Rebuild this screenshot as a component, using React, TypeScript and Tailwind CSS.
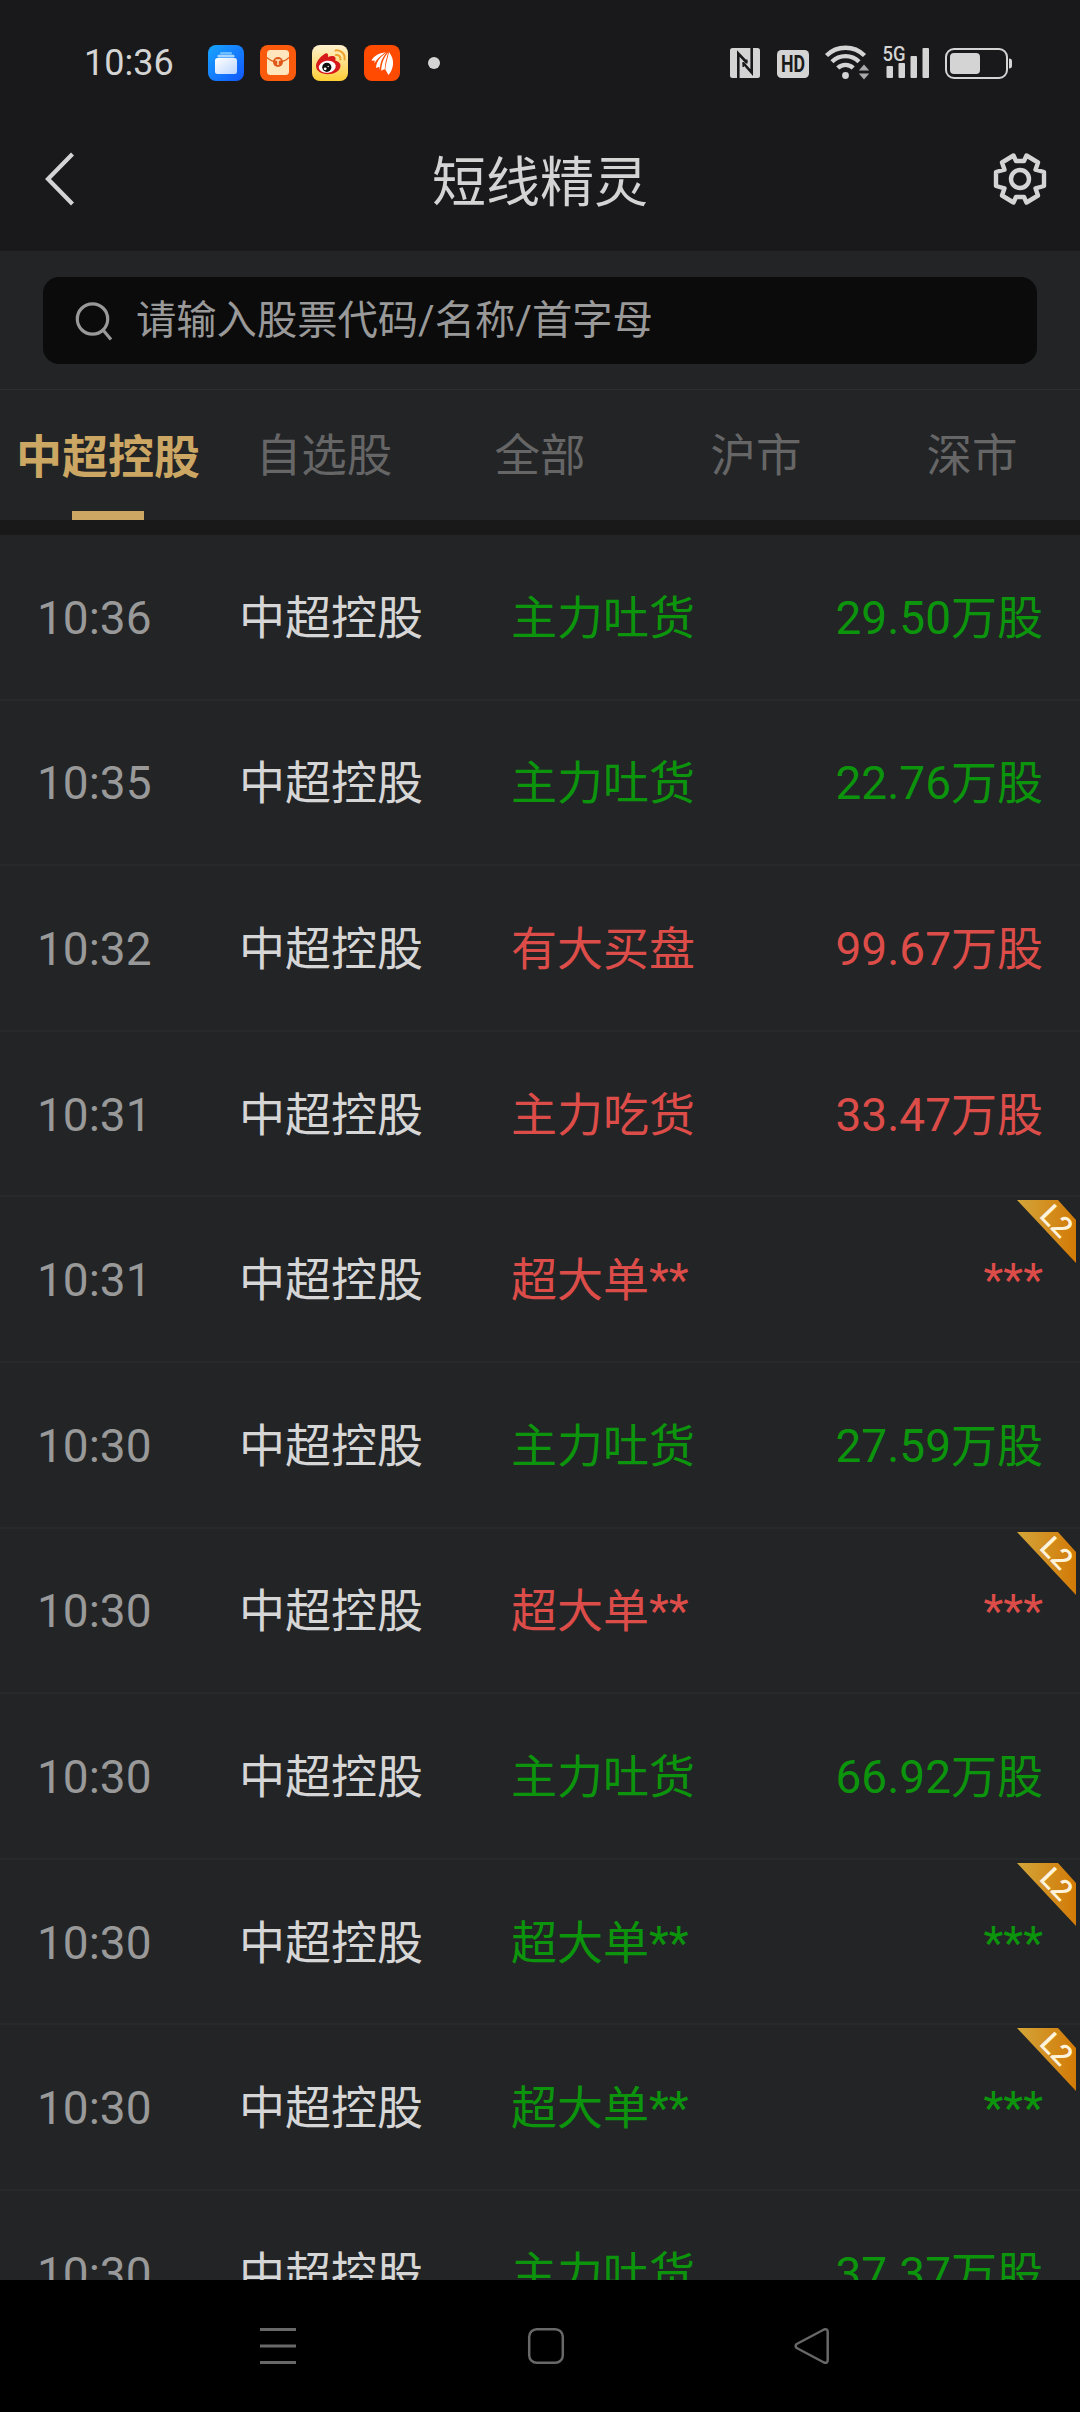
type Tone = 'up' | 'down';

interface Signal {
  time: string;
  name: string;
  action: string;
  amount: string;
  tone: Tone;
  locked?: boolean;
}

const TABS = ['中超控股', '自选股', '全部', '沪市', '深市'];

const SIGNALS: Signal[] = [
  { time: '10:36', name: '中超控股', action: '主力吐货', amount: '29.50万股', tone: 'down' },
  { time: '10:35', name: '中超控股', action: '主力吐货', amount: '22.76万股', tone: 'down' },
  { time: '10:32', name: '中超控股', action: '有大买盘', amount: '99.67万股', tone: 'up' },
  { time: '10:31', name: '中超控股', action: '主力吃货', amount: '33.47万股', tone: 'up' },
  { time: '10:31', name: '中超控股', action: '超大单**', amount: '***', tone: 'up', locked: true },
  { time: '10:30', name: '中超控股', action: '主力吐货', amount: '27.59万股', tone: 'down' },
  { time: '10:30', name: '中超控股', action: '超大单**', amount: '***', tone: 'up', locked: true },
  { time: '10:30', name: '中超控股', action: '主力吐货', amount: '66.92万股', tone: 'down' },
  { time: '10:30', name: '中超控股', action: '超大单**', amount: '***', tone: 'down', locked: true },
  { time: '10:30', name: '中超控股', action: '超大单**', amount: '***', tone: 'down', locked: true },
  { time: '10:30', name: '中超控股', action: '主力吐货', amount: '37.37万股', tone: 'down' },
];

function AppIcons() {
  return (
    <div className="flex gap-4">
      <svg width="36" height="36" viewBox="0 0 36 36">
        <defs>
          <linearGradient id="files" x1="0" y1="0" x2="1" y2="1">
            <stop offset="0" stopColor="#17a5ff" />
            <stop offset="1" stopColor="#1257fb" />
          </linearGradient>
          <linearGradient id="folder" x1="0" y1="0" x2="1" y2="1">
            <stop offset="0" stopColor="#ffffff" />
            <stop offset="1" stopColor="#bcd6ff" />
          </linearGradient>
        </defs>
        <rect width="36" height="36" rx="8" fill="url(#files)" />
        <rect x="12" y="7" width="12" height="2.5" rx="1.2" fill="#6dbdff" />
        <rect x="9.500" y="9.800" width="17" height="2.600" rx="1.2" fill="#a5d5ff" />
        <rect x="7" y="13" width="22" height="16" rx="2.500" fill="url(#folder)" />
      </svg>
      <svg width="36" height="36" viewBox="0 0 36 36">
        <rect width="36" height="36" rx="8" fill="#f95a0c" />
        <rect x="7" y="5" width="22" height="25" rx="3.500" fill="#ffe6bd" />
        <path d="M7 12.500c3 3 7 4.500 11 4.500s8-1.500 11-4.500" fill="none" stroke="#e2601c" strokeWidth="1.3" />
        <circle cx="18" cy="17" r="5" fill="#e0571a" />
        <path d="M15.500 15h5M18 15v5" stroke="#ffe6bd" strokeWidth="1.5" />
      </svg>
      <svg width="36" height="36" viewBox="0 0 36 36">
        <defs>
          <linearGradient id="weibo" x1="0" y1="0" x2="0" y2="1">
            <stop offset="0" stopColor="#fff0cf" />
            <stop offset="1" stopColor="#ffcf35" />
          </linearGradient>
        </defs>
        <rect width="36" height="36" rx="8" fill="url(#weibo)" />
        <path
          d="M4 21c0-5 6-11 9.500-12.500 2-.7 3 1 2.500 3.500 3-1.500 7-1.500 7.500 1 .2 1-.2 2-.2 2.500 3 .8 5.200 2.500 5.200 5.200 0 5-6.500 8.500-12.800 8.500S4 26 4 21z"
          fill="#d8191c"
        />
        <ellipse cx="15.300" cy="21.800" rx="8.500" ry="6" fill="#fff" transform="rotate(-8 15.300 21.800)" />
        <circle cx="14.800" cy="22.300" r="4.600" fill="#111" />
        <circle cx="13.200" cy="23.800" r="1.400" fill="#fff" />
        <circle cx="16.200" cy="21.500" r=".7" fill="#fff" />
        <path d="M23.500 5.500c5-1 10 3.500 9 9M24 10c2.600-.4 5 1.600 4.400 4.600" fill="none" stroke="#eda02c" strokeWidth="2" strokeLinecap="round" />
      </svg>
      <svg width="36" height="36" viewBox="0 0 36 36">
        <rect width="36" height="36" rx="8" fill="#ff4a02" />
        <g fill="#fff">
          <path d="M21.500 7.200C15 8 9.500 11 7.500 15.500l3.300.3-.6 2.800c2.500-4.600 6.300-7.800 11.300-11.400z" />
          <path d="M23 7.300c-6 4-10.500 8.500-11 15.700l3.300-1.300.5 3.600C16 17.500 18.500 12 23 7.300z" />
          <path d="M24.300 7.300C20 12.500 17.500 18 17.200 25.800l3-1.600.5.500c.2-6.700 2-12.200 3.600-17.400z" />
          <path d="M25 7c-1 5.500-3.500 12-3.700 17.500l3.200 5.500c5.500-6.500 6.500-15.500.5-23z" />
        </g>
      </svg>
    </div>
  );
}

function SystemIcons() {
  return (
    <svg width="284" height="40" viewBox="730 42 284 40" fill="#d4d4d4">
      {/* nfc */}
      <rect x="730" y="47" width="30" height="30" rx="2.500" />
      <path d="M738.300 77V52.500l8.500 9M751.700 47v24.500l-8.500-9.500" fill="none" stroke="#19191b" strokeWidth="2.600" />
      <path d="M743.200 66v-5M746.800 58.500v4" fill="none" stroke="#19191b" strokeWidth="1.500" />
      {/* hd */}
      <rect x="777" y="49" width="32" height="28" rx="4.500" />
      <text x="793" y="71.300" fill="#19191b" textAnchor="middle" textLength="24" lengthAdjust="spacingAndGlyphs" className="font-[Roboto] text-[23px] font-bold">
        HD
      </text>
      {/* wifi */}
      <g fill="none" stroke="#d4d4d4" strokeWidth="4.400">
        <path d="M826.500 54.500a27 27 0 0 1 38 0" />
        <path d="M832 60.800a19 19 0 0 1 27 0" />
        <path d="M837.800 67a11 11 0 0 1 15.400 0" />
      </g>
      <circle cx="845.500" cy="74.500" r="3.400" />
      <path d="M864 63.500l5.200 6h-10.400zM864 78.500l5.200-6h-10.400z" fill="#a9a9a9" />
      {/* signal */}
      <text x="882.500" y="60" textLength="23" lengthAdjust="spacingAndGlyphs" className="font-[Roboto] text-[21px] font-medium">
        5G
      </text>
      <rect x="886.500" y="65" width="6.500" height="12" rx="1" />
      <rect x="898.500" y="62" width="6.500" height="15" rx="1" />
      <rect x="910.500" y="55" width="6.500" height="22" rx="1" />
      <rect x="922.500" y="47" width="6.500" height="30" rx="1" />
      {/* battery */}
      <rect x="946" y="48" width="61" height="29" rx="8" fill="none" stroke="#d4d4d4" strokeWidth="2" />
      <rect x="950" y="52" width="30" height="21" rx="4" />
      <path d="M1009 57.500c2.200 0 3 1 3 2.500v5c0 1.500-.8 2.500-3 2.500z" />
    </svg>
  );
}

function StatusBar() {
  return (
    <div className="flex h-[125px] items-center pr-[66px] pl-[84px] text-[#d4d4d4]">
      <span className="w-[124px] text-[36px] leading-none">10:36</span>
      <AppIcons />
      <span className="ml-7 size-3 rounded-full bg-[#d4d4d4]" />
      <div className="ml-auto">
        <SystemIcons />
      </div>
    </div>
  );
}

function TitleBar() {
  return (
    <header className="flex h-[126px] items-center justify-between pr-[32px] pb-[18px] pl-[43px] text-[#d4d4d4]">
      <svg width="54" height="54" viewBox="0 0 54 54" fill="none" stroke="currentColor" strokeWidth="4.200">
        <path d="M29.500 2 5 27l24.500 25" />
      </svg>
      <h1 className="pt-[9px] pr-[9px] text-[54px] leading-none">短线精灵</h1>
      <svg width="56" height="56" viewBox="0 0 56 56" fill="none" stroke="currentColor" strokeWidth="4.400" strokeLinejoin="round">
        <path d="M21.500 4.500 24 10h8l2.500-5.500L46 11.500l-2.500 7.200 8.500 2.300v14l-8.500 2.300L46 44.500l-11.500 7L32 46h-8l-2.500 5.500L10 44.500l2.500-7.200L4 35V21l8.500-2.300L10 11.500z" />
        <circle cx="28" cy="28" r="9" />
      </svg>
    </header>
  );
}

function SearchBox() {
  return (
    <div className="h-[139px] border-b border-[#2d2f31] px-[43px] pt-[26px]">
      <div className="flex h-[87px] items-center rounded-2xl bg-[#0b0b0b] pl-8 text-[#999]">
        <svg width="38" height="40" viewBox="0 0 38 40" fill="none" stroke="currentColor" strokeWidth="3.200">
          <circle cx="17.500" cy="18" r="15.200" />
          <path d="m28 29 8 9.500" />
        </svg>
        <span className="ml-[23px] pt-0.5 text-[40.3px] leading-none">请输入股票代码/名称/首字母</span>
      </div>
    </div>
  );
}

function Tabs() {
  return (
    <nav className="grid h-[130px] grid-cols-5 text-[45.5px] leading-none">
      {TABS.map((tab, i) => (
        <div key={tab} className="flex flex-col items-center justify-between pt-11 whitespace-nowrap">
          <span className={i === 0 ? 'text-[46px] font-bold text-[#cba763]' : 'text-[#666]'}>{tab}</span>
          {i === 0 && <span className="h-[9px] w-[72px] bg-[#cba763]" />}
        </div>
      ))}
    </nav>
  );
}

function L2Badge() {
  return (
    <svg className="absolute top-[3px] right-1" width="59" height="63" viewBox="0 0 59 63">
      <defs>
        <linearGradient id="l2" x1="0" y1="0" x2="1" y2="0">
          <stop offset="0" stopColor="#d3a53a" />
          <stop offset="1" stopColor="#d27a06" />
        </linearGradient>
      </defs>
      <path d="M0 0h41l18 20v43z" fill="url(#l2)" />
      <text transform="translate(39.500 21) rotate(46)" y="10" fill="#fff3dc" textAnchor="middle" className="font-[Roboto] text-[29px] font-medium">
        L2
      </text>
    </svg>
  );
}

function SignalRow({ signal }: { signal: Signal }) {
  const color = signal.tone === 'up' ? 'text-[#dc4c48]' : 'text-[#0c940c]';

  return (
    <li className="relative flex h-[165.6px] shrink-0 items-center border-b-2 border-[#28292b] pt-0.5 pr-[37px] pl-[37px]">
      <span className="w-[202px] text-[#999]">{signal.time}</span>
      <span className="w-[272px] text-[#d6d6d6]">{signal.name}</span>
      <span className={color}>{signal.action}</span>
      <span className={`ml-auto ${color}`}>{signal.amount}</span>
      {signal.locked && <L2Badge />}
    </li>
  );
}

function NavigationBar() {
  return (
    <footer className="flex h-[132px] items-center bg-black pl-[258px] text-[#686868]">
      <svg width="40" height="40" viewBox="0 0 40 40" stroke="currentColor" strokeWidth="3">
        <path d="M2 3.500h36M2 20h36M2 36.500h36" />
      </svg>
      <svg className="ml-[228px]" width="40" height="40" viewBox="0 0 40 40" fill="none" stroke="currentColor" strokeWidth="2.500">
        <rect x="3.200" y="3.200" width="33.600" height="33.600" rx="7.500" />
      </svg>
      <svg className="ml-[227px]" width="40" height="40" viewBox="0 0 40 40" fill="none" stroke="currentColor" strokeWidth="2.500" strokeLinejoin="round">
        <path d="M3.700 18 31 3.500q3.700-1.200 3.700 2.500v28q0 3.700-3.700 2.500L3.700 22q-2.200-2 0-4z" />
      </svg>
    </footer>
  );
}

export default function App() {
  return (
    <div className="flex h-[2412px] w-[1080px] flex-col overflow-hidden bg-[#19191b] font-[Roboto,'Noto_Sans_CJK_SC',sans-serif]">
      <StatusBar />
      <TitleBar />
      <div className="bg-[#222426]">
        <SearchBox />
        <Tabs />
      </div>
      <div className="h-[15px] bg-[#191919]" />
      <ul className="flex min-h-0 flex-1 flex-col overflow-hidden bg-[#222426] text-[46px] leading-none">
        {SIGNALS.map((signal, i) => (
          <SignalRow key={i} signal={signal} />
        ))}
      </ul>
      <NavigationBar />
    </div>
  );
}
